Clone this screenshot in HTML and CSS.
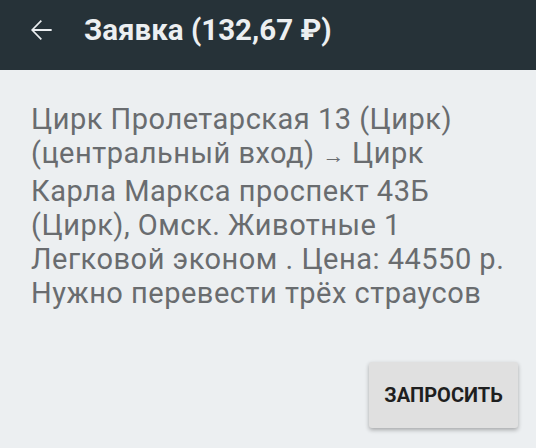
FILE: index.html
```html
<!DOCTYPE html>
<html>
<head>
<meta charset="utf-8">
<link rel="stylesheet" href="styles.css">
</head>
<body>
<div class="appbar">
  <svg class="back" viewBox="0 0 24 24"><path d="M20 11.25H6.9l5.8-5.8-0.9-0.9L4.5 12l7.3 7.45 0.9-0.9-5.8-5.8H20z" fill="#eceff1"/></svg>
  <div class="title">Заявка (132,67 ₽)</div>
</div>
<div class="content">
  <p class="desc">Цирк Пролетарская 13 (Цирк)<br>(центральный вход) <span class="arrow">→</span> Цирк<br>Карла Маркса проспект 43Б<br>(Цирк), Омск. Животные 1<br>Легковой эконом . Цена: 44550 р.<br>Нужно перевести трёх страусов</p>
  <div class="actions">
    <button class="btn">ЗАПРОСИТЬ</button>
  </div>
</div>
</body>
</html>
```
FILE: styles.css
```css
html, body {
  margin: 0;
  padding: 0;
  background: #eceff1;
  font-family: Roboto, "Noto Sans", sans-serif;
  width: 536px;
  height: 448px;
  overflow: hidden;
}
.appbar {
  height: 70px;
  background: #263238;
  display: flex;
  align-items: center;
  padding-left: 25px;
  padding-bottom: 10px;
  box-sizing: border-box;
}
.back {
  width: 32px;
  height: 32px;
}
.title {
  margin-left: 27px;
  color: #eceff1;
  font-weight: 700;
  font-size: 29.5px;
}
.content {
  padding: 32px 10px 0 31px;
}
.desc {
  margin: 0;
  font-size: 29px;
  letter-spacing: 0.5px;
  line-height: 34.3px;
  color: #696c6f;
  white-space: nowrap;
}
.arrow {
  font-size: 22px;
  letter-spacing: 0;
}
.actions {
  display: flex;
  justify-content: flex-end;
  padding-right: 8px;
  margin-top: 51px;
}
.btn {
  background: #e0e0e0;
  border: none;
  border-radius: 3px;
  width: 149px;
  height: 66px;
  font-family: Roboto, sans-serif;
  font-weight: 700;
  font-size: 20px;
  color: #1f1f1f;
  box-shadow: 0 2px 4px rgba(0,0,0,0.3);
  padding: 0;
}
```
